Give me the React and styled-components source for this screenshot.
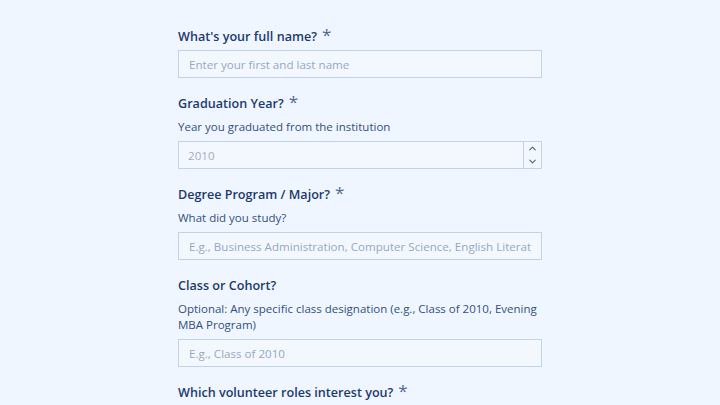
import React from 'react';
import styled, { createGlobalStyle } from 'styled-components';
import { ChevronUp, ChevronDown } from 'lucide-react';

const GlobalStyle = createGlobalStyle`
  html, body {
    margin: 0;
    padding: 0;
    background: #eff6ff;
    font-family: "Open Sans", "Noto Sans", sans-serif;
  }
  * { box-sizing: border-box; }
`;

const fields = [
  { id: 'name', label: "What's your full name?", required: true, placeholder: 'Enter your first and last name' },
  { id: 'year', label: 'Graduation Year?', required: true, desc: 'Year you graduated from the institution', placeholder: '2010', number: true },
  { id: 'degree', label: 'Degree Program / Major?', required: true, desc: 'What did you study?', placeholder: 'E.g., Business Administration, Computer Science, English Literature' },
  { id: 'cohort', label: 'Class or Cohort?', desc: 'Optional: Any specific class designation (e.g., Class of 2010, Evening MBA Program)', placeholder: 'E.g., Class of 2010' },
];

const App = () => {
  return (
    <>
      <GlobalStyle />
      <Page>
        <Form onSubmit={(e) => e.preventDefault()}>
          {fields.map((f) => (
            <Field key={f.id}>
              <Label htmlFor={f.id}>
                {f.label}
                {f.required && <Star>*</Star>}
              </Label>
              {f.desc && <Desc>{f.desc}</Desc>}
              {f.number ? (
                <NumberBox>
                  <NumberInput id={f.id} type="text" placeholder={f.placeholder} />
                  <Stepper>
                    <ChevronUp size={11} strokeWidth={2.2} />
                    <ChevronDown size={11} strokeWidth={2.2} />
                  </Stepper>
                </NumberBox>
              ) : (
                <Input id={f.id} type="text" placeholder={f.placeholder} />
              )}
            </Field>
          ))}
          <Field>
            <Label>
              Which volunteer roles interest you?
              <Star>*</Star>
            </Label>
          </Field>
        </Form>
      </Page>
    </>
  );
};

const Page = styled.div`
  min-height: 405px;
  display: flex;
  justify-content: center;
  padding-top: 27px;
`;

const Form = styled.form`
  width: 364px;
  display: flex;
  flex-direction: column;
  gap: 16px;
`;

const Field = styled.div`
  display: flex;
  flex-direction: column;
`;

const Label = styled.label`
  font-size: 12.6px;
  font-weight: 600;
  line-height: 20px;
  color: #1e3a6c;
  margin-bottom: 3px;
  display: flex;
  align-items: flex-start;
`;

const Star = styled.span`
  font-size: 17px;
  font-weight: 400;
  line-height: 14px;
  color: #4d6a98;
  margin-left: 5px;
  margin-top: 1px;
`;

const Desc = styled.p`
  margin: 2px 0 6px;
  font-size: 11.5px;
  line-height: 16px;
  color: #334f7c;
`;

const Input = styled.input`
  height: 28px;
  width: 100%;
  border: 1px solid #c3d3e6;
  background: #f3f8ff;
  padding: 0 10px;
  font-family: inherit;
  font-size: 11.6px;
  color: #1e3a6c;
  outline: none;
  &::placeholder {
    color: #97a7bf;
  }
`;

const NumberBox = styled.div`
  height: 28px;
  display: flex;
  border: 1px solid #c3d3e6;
  background: #f3f8ff;
`;

const NumberInput = styled.input`
  flex: 1;
  border: none;
  background: transparent;
  padding: 0 9px;
  font-family: inherit;
  font-size: 11.6px;
  outline: none;
  &::placeholder {
    color: #a3acb9;
  }
`;

const Stepper = styled.div`
  width: 18px;
  border-left: 1px solid #c3d3e6;
  display: flex;
  flex-direction: column;
  align-items: center;
  justify-content: center;
  gap: 2px;
  color: #3f5d8e;
`;

export default App;
